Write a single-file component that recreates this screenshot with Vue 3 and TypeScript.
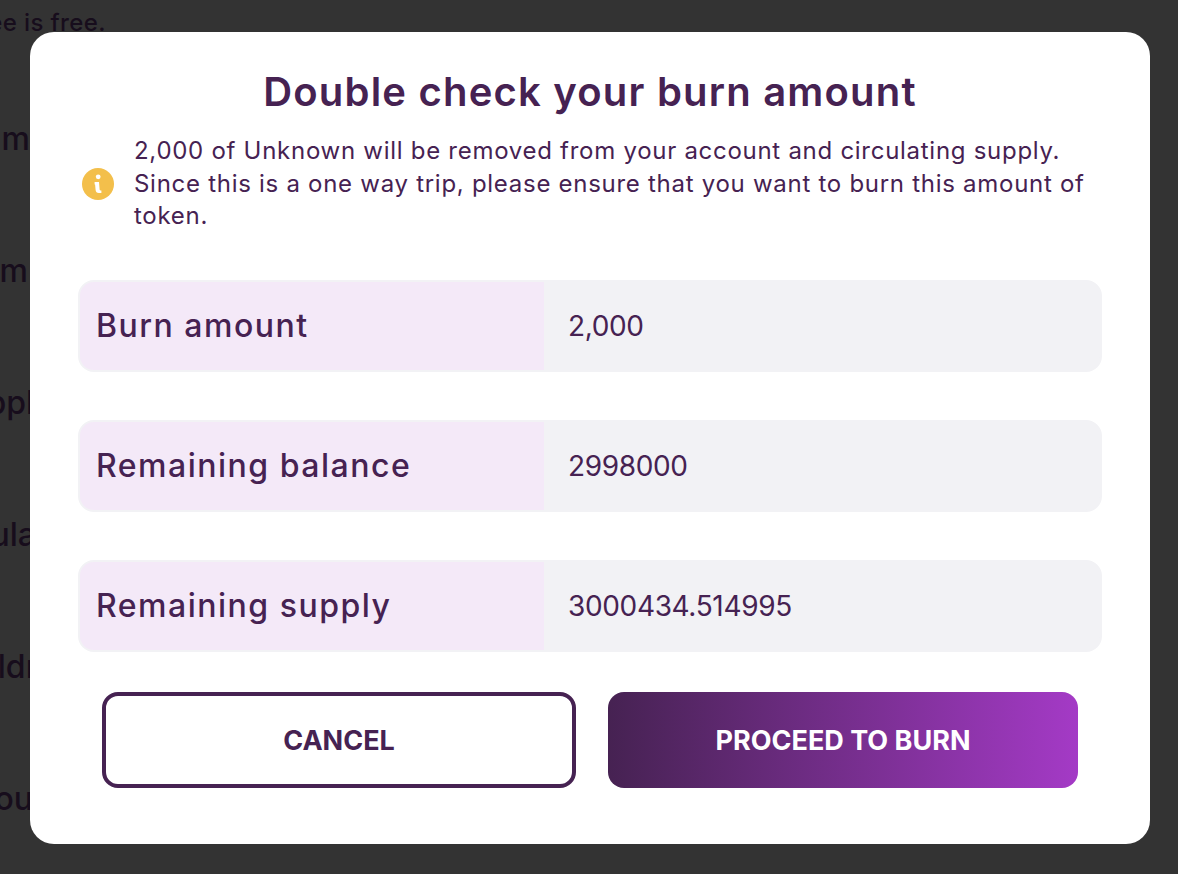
<script setup lang="ts">
interface Row { label: string; value: string }
interface Behind { text: string; width: number }
const rows: Row[] = [
  { label: 'Burn amount', value: '2,000' },
  { label: 'Remaining balance', value: '2998000' },
  { label: 'Remaining supply', value: '3000434.514995' },
]
const behind: Behind[] = [
  { text: 'um', width: 30 },
  { text: 'm', width: 28 },
  { text: 'ppl', width: 34 },
  { text: 'ula', width: 36 },
  { text: 'ldr', width: 38 },
  { text: 'ou', width: 33 },
]
</script>

<template>
  <div class="page">
    <div class="behind">
      <p class="fee"><span>Transaction fee is free.</span></p>
      <div class="behind-rows">
        <div v-for="b in behind" :key="b.text" class="behind-row" :style="{ width: b.width + 'px' }">{{ b.text }}</div>
      </div>
    </div>
    <section class="modal">
      <h1 class="title">Double check your burn amount</h1>
      <div class="notice">
        <svg class="info" viewBox="0 0 32 32" width="32" height="32" aria-hidden="true">
          <circle cx="16" cy="16" r="16" fill="#f3bf4b" />
          <circle cx="16.2" cy="8.8" r="2.4" fill="#fff" />
          <path d="M12.6 14h4.4l.6 7.2c.1 1 .7 1.3 1.8 1.3v2.4h-2.6c-2 0-3-1-3.2-3l-.5-5.5h-.5z" fill="#fff" />
        </svg>
        <p class="notice-text">2,000 of Unknown will be removed from your account and circulating supply. Since this is a one way trip, please ensure that you want to burn this amount of token.</p>
      </div>
      <div class="rows">
        <div v-for="r in rows" :key="r.label" class="row">
          <div class="row-label">{{ r.label }}</div>
          <div class="row-value">{{ r.value }}</div>
        </div>
      </div>
      <div class="actions">
        <button class="btn cancel" type="button">CANCEL</button>
        <button class="btn proceed" type="button">PROCEED TO BURN</button>
      </div>
    </section>
  </div>
</template>

<style>
body { margin: 0; background: #333333; }
</style>

<style scoped>
.page {
  position: relative;
  width: 1178px;
  height: 874px;
  overflow: hidden;
  background: #333333;
  font-family: "Inter", "Liberation Sans", sans-serif;
}
.behind {
  color: #170d1c;
  font-weight: 500;
}
.fee {
  width: 106px;
  height: 46px;
  margin: 0;
  display: flex;
  justify-content: flex-end;
  line-height: 46px;
  font-size: 24px;
  letter-spacing: 0.4px;
  white-space: nowrap;
  overflow: hidden;
}
.fee span { flex: none; }
.behind-rows {
  margin-top: 26px;
  font-size: 32px;
}
.behind-row {
  height: 132px;
  display: flex;
  justify-content: flex-end;
  align-items: center;
  white-space: nowrap;
}
.modal {
  position: absolute;
  left: 30px;
  top: 32px;
  width: 1120px;
  height: 812px;
  box-sizing: border-box;
  padding: 32px 48px 0;
  background: #fff;
  border-radius: 24px;
  color: #462252;
}
.title {
  margin: 0;
  text-align: center;
  font-size: 40px;
  line-height: 56px;
  font-weight: 600;
  letter-spacing: 1.2px;
  color: #462252;
}
.notice {
  display: flex;
  align-items: center;
  gap: 20px;
  margin: 15px 4px 0;
}
.info { flex: none; }
.notice-text {
  margin: 0;
  font-size: 24px;
  line-height: 32.5px;
  font-weight: 400;
  letter-spacing: 0.72px;
}
.rows {
  display: flex;
  flex-direction: column;
  gap: 48px;
  margin-top: 47.5px;
}
.row {
  display: flex;
  height: 92px;
  box-sizing: border-box;
  border: 2px solid #f2f2f5;
  border-radius: 16px;
  overflow: hidden;
  background: #f2f2f5;
}
.row-label {
  width: 464px;
  box-sizing: border-box;
  padding: 0 0 2px 16px;
  display: flex;
  align-items: center;
  background: #f4e9f8;
  font-size: 32px;
  font-weight: 500;
  letter-spacing: 1.5px;
}
.row-value {
  flex: 1;
  padding-left: 24px;
  display: flex;
  align-items: center;
  font-size: 28px;
  letter-spacing: -0.35px;
}
.actions {
  display: flex;
  gap: 32px;
  margin: 40px 24px 0;
}
.btn {
  height: 96px;
  box-sizing: border-box;
  border-radius: 16px;
  font-family: inherit;
  font-size: 27px;
  font-weight: 700;
}
.cancel {
  flex: 0 0 474px;
  background: #fff;
  border: 4px solid #462252;
  color: #462252;
}
.proceed {
  flex: 0 0 470px;
  border: 0;
  color: #fff;
  background: linear-gradient(90deg, #462252 0%, #a43ac6 100%);
}
</style>
